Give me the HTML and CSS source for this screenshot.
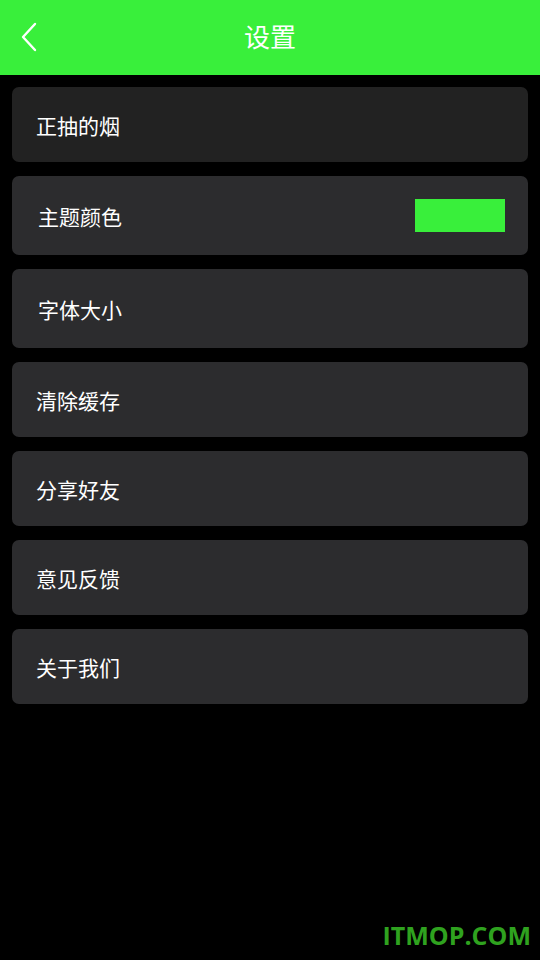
FILE: index.html
```html
<!DOCTYPE html>
<html lang="zh">
<head>
  <meta charset="UTF-8">
  <title>设置</title>
  <meta name="viewport" content="width=device-width, initial-scale=1.0">
  <link rel="stylesheet" href="styles.css">
</head>
<body>
<div id="header">
  <svg class="back" width="20" height="32" viewBox="0 0 20 32">
    <path d="M16 3 L4 16 L16 29" fill="none" stroke="#fff" stroke-width="2.4" stroke-linecap="round" stroke-linejoin="round"/>
  </svg>
  <div class="title">设置</div>
</div>
<div id="list">
  <div class="item first">正抽的烟</div>
  <div class="item tall">主题颜色<span class="swatch"></span></div>
  <div class="item tall">字体大小</div>
  <div class="item">清除缓存</div>
  <div class="item">分享好友</div>
  <div class="item">意见反馈</div>
  <div class="item">关于我们</div>
</div>
<div class="mark">ITMOP.COM</div>
</body>
</html>
```

FILE: styles.css
```css
body, html {
  margin: 0;
  padding: 0;
  height: 100%;
  font-family: "Noto Sans CJK SC", "Noto Sans", sans-serif;
  background-color: #000;
  color: #f0f0f0;
  overflow: hidden;
}
#header {
  height: 75px;
  background: #39ef3b;
  display: flex;
  align-items: center;
  justify-content: center;
  position: relative;
}
.back {
  position: absolute;
  left: 19px;
  top: 21px;
}
.title {
  color: #fff;
  font-size: 26px;
  line-height: 1;
  padding-bottom: 4px;
}
#list {
  padding: 12px 12px 0;
  display: flex;
  flex-direction: column;
  gap: 14px;
}
.item {
  height: 75px;
  background: #2c2c2e;
  border-radius: 7px;
  display: flex;
  align-items: center;
  justify-content: space-between;
  padding: 0 23px 0 24px;
  font-size: 21px;
  color: #fff;
}
.item.first {
  background: #222222;
}
.item.tall {
  height: 79px;
  padding-left: 26px;
}
.swatch {
  width: 90px;
  height: 33px;
  background: #39ef3b;
}
.mark {
  position: absolute;
  right: 9px;
  bottom: 8px;
  color: #2fa21f;
  font-family: "Open Sans", sans-serif;
  font-weight: 700;
  font-size: 25px;
}
```
